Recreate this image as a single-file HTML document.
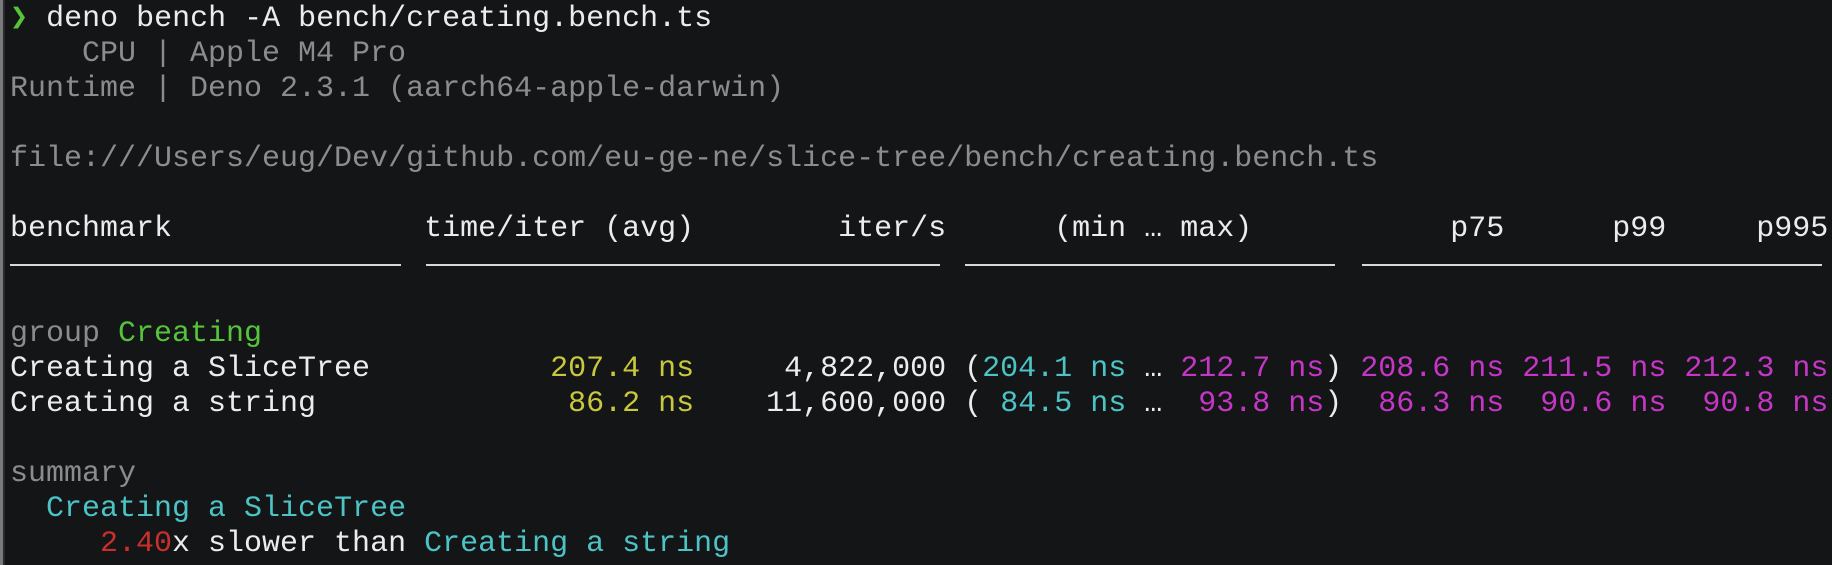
<!DOCTYPE html>
<html><head><meta charset="utf-8"><style>
html,body{margin:0;padding:0;background:#141517;}
body{width:1832px;height:565px;overflow:hidden;position:relative;}
.bar{position:absolute;left:0;top:0;width:3px;height:565px;background:#7a7a7a;}
.bar2{position:absolute;left:3px;top:0;width:2px;height:565px;background:#2a2b2d;}
pre{position:absolute;left:10px;top:2px;margin:0;font-family:"Liberation Mono",monospace;font-size:30px;line-height:35px;color:#ececec;white-space:pre;letter-spacing:0;}
.g{color:#8c8c8c}.gr{color:#55c43a}.y{color:#c9c83c}.c{color:#4cc3c4}.m{color:#c636c6}.r{color:#c9302c}
.u{position:absolute;top:264px;height:2px;background:#d8d8d8;}
</style></head><body>
<div class="bar"></div><div class="bar2"></div>
<pre><span class="gr">❯</span> deno bench -A bench/creating.bench.ts
<span class="g">    CPU | Apple M4 Pro</span>
<span class="g">Runtime | Deno 2.3.1 (aarch64-apple-darwin)</span>

<span class="g">file:///Users/eug/Dev/github.com/eu-ge-ne/slice-tree/bench/creating.bench.ts</span>

benchmark              time/iter (avg)        iter/s      (min … max)           p75      p99     p995


<span class="g">group</span> <span class="gr">Creating</span>
Creating a SliceTree          <span class="y">207.4 ns</span>     4,822,000 (<span class="c">204.1 ns</span> … <span class="m">212.7 ns</span>) <span class="m">208.6 ns 211.5 ns 212.3 ns</span>
Creating a string              <span class="y">86.2 ns</span>    11,600,000 ( <span class="c">84.5 ns</span> … <span class="m"> 93.8 ns</span>) <span class="m"> 86.3 ns  90.6 ns  90.8 ns</span>

<span class="g">summary</span>
  <span class="c">Creating a SliceTree</span>
     <span class="r">2.40</span>x slower than <span class="c">Creating a string</span></pre>
<div class="u" style="left:10px;width:391px"></div>
<div class="u" style="left:426px;width:514px"></div>
<div class="u" style="left:965px;width:370px"></div>
<div class="u" style="left:1362px;width:460px"></div>
</body></html>
